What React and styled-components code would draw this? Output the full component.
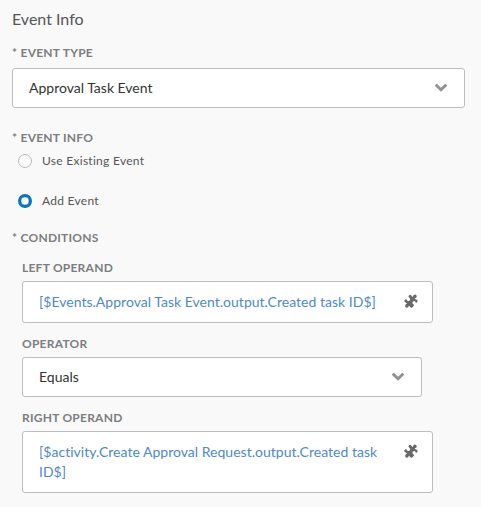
import React from "react";
import styled, { createGlobalStyle } from "styled-components";

const GlobalStyle = createGlobalStyle`
  * { box-sizing: border-box; }
  body { margin: 0; background: #f9f9f9; font-family: Lato, "Liberation Sans", sans-serif; }
`;

const Panel = styled.main`
  display: flex;
  flex-direction: column;
  width: 481px;
  height: 507px;
  padding: 8px 16px 0 12px;
  background: #f9f9f9;
  overflow: hidden;
`;

const Title = styled.h1`
  margin: 0 0 15px;
  font-size: 16px;
  font-weight: 400;
  line-height: 22px;
  color: #555;
`;

const Label = styled.div`
  height: 16px;
  margin-bottom: ${(p) => p.$gap ?? 6}px;
  font-size: 12px;
  font-weight: 700;
  line-height: 16px;
  letter-spacing: 0.24px;
  white-space: nowrap;
  color: #7c7d80;
`;

const Field = styled.section`
  margin-bottom: ${(p) => p.$after}px;
`;

const Box = styled.div`
  display: flex;
  justify-content: space-between;
  border: 1px solid #bcbdc1;
  border-radius: 3px;
  background: #fff;
  font-size: 14px;
  line-height: 20px;
`;

const Select = styled(Box)`
  width: ${(p) => p.$width}px;
  height: 40px;
  align-items: center;
  padding: 0 17px 0 16px;
  color: #333;
`;

const Expression = styled(Box)`
  width: 411px;
  align-items: flex-start;
  padding: 10px 14px 10px 16px;
  letter-spacing: 0.02px;
  color: #5089c6;
`;

const ExpressionText = styled.span`
  width: 348px;
`;

const Choice = styled.label`
  display: flex;
  align-items: center;
  height: 16px;
  margin-bottom: ${(p) => p.$after}px;
  padding-left: 6px;
  gap: 10px;
  font-size: 12px;
  line-height: 16px;
  letter-spacing: 0.28px;
  color: #555;
`;

const ChoiceText = styled.span`
  height: 16px;
`;

const Radio = styled.span`
  width: 14px;
  height: 14px;
  border: ${(p) => (p.$on ? "3px solid #0c75b8" : "1px solid #bbb")};
  box-shadow: ${(p) => (p.$on ? "inset 0 0 0 0.3px #0c75b8" : "none")};
  border-radius: 50%;
  background: ${(p) => (p.$on ? "#fff" : "#fafafa")};
`;

const Conditions = styled.div`
  padding-left: 10px;
`;

const Icon = styled.svg`
  flex: none;
  display: block;
`;

const Chevron = () => (
  <Icon width="12" height="8" viewBox="0 0 12 8">
    <path d="M1.7 1.6 6 5.8l4.3-4.2" fill="none" stroke="#929292" strokeWidth="2.8" strokeLinecap="square" />
  </Icon>
);

const Puzzle = () => (
  <Icon width="14" height="20" viewBox="0 0 14 20">
    <g fill="#686868">
      <path d="M5 3.2Q6 2.2 7 3.2L8.6 4.9 9.4 4.1 11.2 5.9 10.6 6.8 13.2 8Q14.2 9.2 13 10.2L12 10.9 11.4 9.7A1.5 1.5 0 0 0 8.9 11.8L10.2 13.2 8.5 15.2Q7.2 16.3 6.2 15L4.9 13.4 3.9 14.4 1.9 12.5 3 11.4 .7 9.8Q-.2 8.7 .9 7.7L2 6.9 3.2 8.4A1.5 1.5 0 0 0 5.6 6L4.4 4.8Z" />
      <circle cx="10.9" cy="4.4" r="1.8" />
      <circle cx="2.9" cy="13.9" r="1.8" />
    </g>
  </Icon>
);

export default function App() {
  return (
    <>
      <GlobalStyle />
      <Panel>
        <Title>Event Info</Title>
        <Field $after={22}>
          <Label $gap={7}>* EVENT TYPE</Label>
          <Select $width={453}>Approval Task Event<Chevron /></Select>
        </Field>
        <Label $gap={7}>* EVENT INFO</Label>
        <Choice $after={24}><Radio /><ChoiceText>Use Existing Event</ChoiceText></Choice>
        <Choice $after={21}><Radio $on /><ChoiceText>Add Event</ChoiceText></Choice>
        <Label $gap={14}>* CONDITIONS</Label>
        <Conditions>
          <Field $after={13}>
            <Label $gap={5}>LEFT OPERAND</Label>
            <Expression>
              <ExpressionText>[$Events.Approval Task Event.output.Created task ID$]</ExpressionText>
              <Puzzle />
            </Expression>
          </Field>
          <Field $after={13}>
            <Label $gap={5}>OPERATOR</Label>
            <Select $width={400}>Equals<Chevron /></Select>
          </Field>
          <Field $after={0}>
            <Label $gap={5}>RIGHT OPERAND</Label>
            <Expression>
              <ExpressionText>[$activity.Create Approval Request.output.Created task ID$]</ExpressionText>
              <Puzzle />
            </Expression>
          </Field>
        </Conditions>
      </Panel>
    </>
  );
}
